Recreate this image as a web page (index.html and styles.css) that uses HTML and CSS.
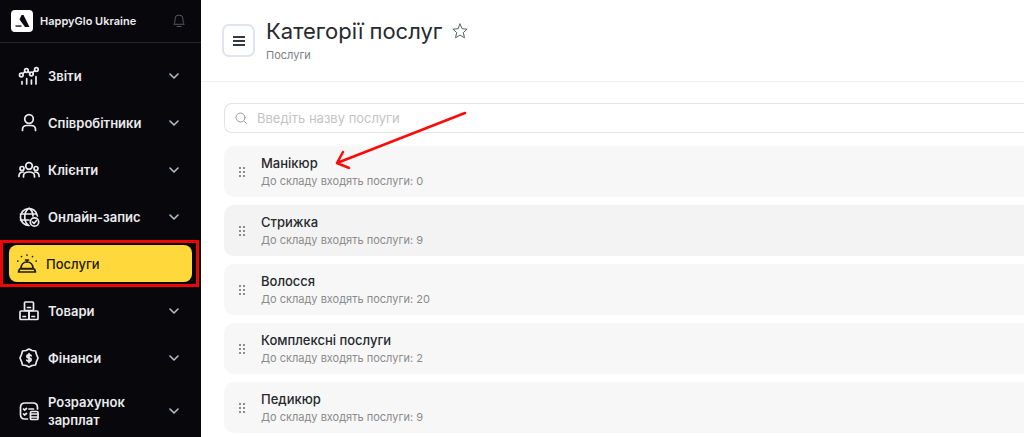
FILE: index.html
```
<!DOCTYPE html>
<html lang="uk">
<head>
  <meta charset="UTF-8">
  <meta name="viewport" content="width=device-width,initial-scale=1.0">
  <title>Категорії послуг</title>
  <link rel="stylesheet" href="styles.css">
</head>
<body>
<svg class="sprite" aria-hidden="true">
  <symbol id="chevron" viewBox="0 0 10 6"><path d="M1 1l4 4 4-4"/></symbol>
  <symbol id="grip" viewBox="0 0 6 10">
    <path d="M0 0h2v2H0zM4 0h2v2H4zM0 4h2v2H0zM4 4h2v2H4zM0 8h2v2H0zM4 8h2v2H4z"/>
  </symbol>
</svg>

<aside class="sidebar">
  <div class="brand">
    <svg class="brand-logo" viewBox="0 0 22 22">
      <rect width="22" height="22" rx="4" fill="#fff"/>
      <path d="M10.500 5h2L18.500 17H14L8.500 9.500z" fill="#0a0a10"/>
      <path d="M4.500 15.200h6v1.800h-6z" fill="#4a4a50"/>
    </svg>
    <span class="brand-name">HappyGlo Ukraine</span>
    <button class="bell" type="button" aria-label="Сповіщення">
      <svg viewBox="0 0 12 14"><path d="M1 10c1-1 1-2 1-5a4 4 0 0 1 8 0c0 3 0 4 1 5zM4 12.500h4"/></svg>
    </button>
  </div>
  <nav class="menu">
    <a class="menu-item" href="#">
      <svg class="menu-icon" viewBox="0 0 22 22">
        <path d="M4 16.500v2.500M8.700 13.500V19M13.400 15v4M18 11.500V19M4.800 8.700l2.200-2M10 6.500l2 1.500M14.700 7.700l2-2"/>
        <circle cx="3.300" cy="10" r="1.800"/><circle cx="8.400" cy="5.500" r="1.800"/><circle cx="13.400" cy="9" r="1.800"/><circle cx="18.400" cy="4.500" r="1.800"/>
      </svg>
      <span>Звіти</span><svg class="chevron"><use href="#chevron"/></svg>
    </a>
    <a class="menu-item" href="#">
      <svg class="menu-icon" viewBox="0 0 22 22"><circle cx="11" cy="7" r="4.300"/><path d="M4.500 18.500v-1c0-2.500 1.800-4 4.500-4h4c2.700 0 4.500 1.500 4.500 4v1"/></svg>
      <span>Співробітники</span><svg class="chevron"><use href="#chevron"/></svg>
    </a>
    <a class="menu-item" href="#">
      <svg class="menu-icon" viewBox="0 0 22 22">
        <circle cx="11" cy="7" r="3.300"/><circle cx="4" cy="9.500" r="2"/><circle cx="18" cy="9.500" r="2"/>
        <path d="M5.500 18v-1c0-3 2-4 5.500-4s5.500 1 5.500 4v1M.900 17.500c0-3 1-4.500 4.300-4.500M21.100 17.500c0-3-1-4.500-4.300-4.500"/>
      </svg>
      <span>Клієнти</span><svg class="chevron"><use href="#chevron"/></svg>
    </a>
    <a class="menu-item" href="#">
      <svg class="menu-icon" viewBox="0 0 22 22">
        <path d="M11 19.500A8.500 8.500 0 1 1 19.400 10M10.500 2.500c-5 4-5 13 0 17M11.500 2.500c2.500 2 3.500 5 3.500 7.500M2.500 8h16M2.500 14H11"/>
        <circle cx="16.500" cy="16" r="4.200"/><path d="M14.500 16l1.500 1.500 2.500-3"/>
      </svg>
      <span>Онлайн-запис</span><svg class="chevron"><use href="#chevron"/></svg>
    </a>
    <a class="menu-item active" href="#" aria-current="page">
      <svg class="menu-icon" viewBox="0 0 22 22">
        <path d="M5 15.500c0-4 2.500-6.500 6-6.500s6 2.500 6 6.500zM3.500 16h15l1 3h-17zM11 9V7M9.500 7h3"/>
        <path d="M11 2v.100M5.500 3.500v.100M16.500 3.500v.100M1.800 8v.100M20.200 8v.100"/>
      </svg>
      <span>Послуги</span>
    </a>
    <a class="menu-item" href="#">
      <svg class="menu-icon" viewBox="0 0 22 22">
        <rect x="6.500" y="2" width="9" height="8.500" rx="1"/><rect x="2" y="11" width="9" height="8.500" rx="1"/><rect x="11" y="11" width="9" height="8.500" rx="1"/>
        <path d="M9.500 7.500h3M5 16.500h2.500M14 16.500h2.500"/>
      </svg>
      <span>Товари</span><svg class="chevron"><use href="#chevron"/></svg>
    </a>
    <a class="menu-item" href="#">
      <svg class="menu-icon" viewBox="0 0 22 22">
        <path d="M11 2l3 1.500 3.500.500 1 3.500 1.500 3.500-1.500 3.500-1 3.500-3.500.500-3 1.500-3-1.500-3.500-.500-1-3.500L2 11l1.500-3.500 1-3.500L8 3.500z"/>
        <path d="M13.200 8.800c-.500-.800-1.200-1-2.200-1-2.800 0-2.800 2.900 0 3.200s2.800 3.200 0 3.200c-1 0-1.700-.200-2.200-1M11 6.500v9"/>
      </svg>
      <span>Фінанси</span><svg class="chevron"><use href="#chevron"/></svg>
    </a>
    <a class="menu-item" href="#">
      <svg class="menu-icon" viewBox="0 0 22 22">
        <path d="M9.500 19H7c-3 0-4.500-1.500-4.500-4.500v-7C2.500 4.500 4 3 7 3h8c3 0 4.500 1.500 4.500 4.500V9M5.500 9l1 1L8.500 8.500M11 9h4.500M5.500 14l1 1 2-1.500"/>
        <rect x="12.500" y="11.500" width="7.500" height="8" rx="1"/><path d="M12.500 14h7.500M12.500 17h7.500"/>
      </svg>
      <span>Розрахунок зарплат</span><svg class="chevron"><use href="#chevron"/></svg>
    </a>
  </nav>
</aside>

<main class="content">
  <header class="page-header">
    <button class="toggle" type="button" aria-label="Меню">
      <svg viewBox="0 0 12 12"><path d="M0 2h12M0 6h12M0 10h12"/></svg>
    </button>
    <div class="heading">
      <div class="title-row">
        <h1>Категорії послуг</h1>
        <button class="star" type="button" aria-label="Додати в обране">
          <svg viewBox="0 0 16 16"><path d="M8 1l2.100 4.700 5 .5-3.800 3.400 1.200 5.200L8 12.100l-4.500 2.700 1.200-5.200L.900 6.200l5-.500z"/></svg>
        </button>
      </div>
      <div class="subtitle">Послуги</div>
    </div>
  </header>

  <div class="panel">
    <label class="search">
      <svg viewBox="0 0 12 12"><circle cx="5.500" cy="5.500" r="4.500"/><path d="M9 9l2.500 2.500"/></svg>
      <input type="text" placeholder="Введіть назву послуги" aria-label="Введіть назву послуги">
    </label>

    <ul class="categories">
      <li class="category">
        <svg class="grip"><use href="#grip"/></svg>
        <div><div class="name">Манікюр</div><div class="count">До складу входять послуги: 0</div></div>
        <svg class="arrow" viewBox="0 0 134 60"><path d="M132 4L4 54M10 43L4 54l12 5"/></svg>
      </li>
      <li class="category hovered">
        <svg class="grip"><use href="#grip"/></svg>
        <div><div class="name">Стрижка</div><div class="count">До складу входять послуги: 9</div></div>
      </li>
      <li class="category">
        <svg class="grip"><use href="#grip"/></svg>
        <div><div class="name">Волосся</div><div class="count">До складу входять послуги: 20</div></div>
      </li>
      <li class="category">
        <svg class="grip"><use href="#grip"/></svg>
        <div><div class="name">Комплексні послуги</div><div class="count">До складу входять послуги: 2</div></div>
      </li>
      <li class="category">
        <svg class="grip"><use href="#grip"/></svg>
        <div><div class="name">Педикюр</div><div class="count">До складу входять послуги: 9</div></div>
      </li>
    </ul>
  </div>
</main>
</body>
</html>
```

FILE: styles.css
```
*{
  box-sizing: border-box;
}
body{
  margin: 0;
  display: flex;
  min-height: 100vh;
  font-family: Inter, "Liberation Sans", sans-serif;
  color: #26292d;
  background: #fff;
}
svg{
  display: block;
  fill: none;
  stroke: currentColor;
  stroke-linecap: round;
  stroke-linejoin: round;
}
button{
  padding: 0;
  border: 0;
  background: none;
  color: inherit;
  font-family: inherit;
}
.sprite{
  position: absolute;
  width: 0;
  height: 0;
}

/* sidebar */
.sidebar{
  flex: 0 0 201px;
  background: #07070c;
  color: #ececef;
}
.brand{
  display: flex;
  align-items: center;
  gap: 7px;
  height: 43px;
  padding: 0 16px 0 11px;
  border-bottom: 1px solid #25252b;
}
.brand-logo{
  width: 22px;
  height: 22px;
  stroke: none;
}
.brand-name{
  flex: 1;
  font-size: 11px;
  font-weight: 600;
  white-space: nowrap;
}
.bell{
  color: #55575e;
}
.bell svg{
  width: 12px;
  height: 14px;
}
.menu{
  display: flex;
  flex-direction: column;
  gap: 10px;
  padding: 14px 9px 0;
}
.menu-item{
  display: flex;
  align-items: center;
  gap: 8px;
  min-height: 37px;
  padding: 7px 13px 7px 9px;
  color: inherit;
  font-size: 13px;
  font-weight: 600;
  line-height: 18px;
  text-decoration: none;
}
.menu-item span{
  flex: 1;
}
.menu-icon{
  flex: none;
  width: 22px;
  height: 22px;
  stroke-width: 1.7;
}
.chevron{
  width: 10px;
  height: 6px;
  color: #b4bdc2;
  stroke-width: 1.6;
}
.active{
  position: relative;
  padding-left: 7px;
  border-radius: 8px;
  background: #ffd93b;
  color: #1d1b12;
  font-weight: 500;
}
.active::after{
  content: "";
  position: absolute;
  inset: -5px -7px -5px -9px;
  border: 3px solid #f00505;
}

/* main part */
.content{
  flex: 1;
  min-width: 0;
}
.page-header{
  display: flex;
  align-items: center;
  gap: 11px;
  height: 82px;
  padding: 0 21px;
  border-bottom: 1px solid #f0f0f0;
}
.toggle{
  display: grid;
  place-items: center;
  width: 33px;
  height: 33px;
  border: 2px solid #e1e4ec;
  border-radius: 7px;
  color: #343a40;
}
.toggle svg{
  width: 12px;
  height: 12px;
  stroke-width: 2;
  stroke-linecap: butt;
}
.heading{
  padding-bottom: 1px;
}
.title-row{
  display: flex;
  align-items: center;
  gap: 10px;
}
h1{
  margin: 0;
  font-size: 22px;
  font-weight: 400;
  line-height: 30px;
}
.star{
  color: #5b6167;
}
.star svg{
  width: 16px;
  height: 16px;
}
.subtitle{
  color: #7b7f84;
  font-size: 11px;
  line-height: 18px;
}
.panel{
  padding: 21px 0 4px 23px;
}
.search{
  display: flex;
  align-items: center;
  gap: 10px;
  height: 30px;
  padding-left: 10px;
  border: 1px solid #e2e2e2;
  border-right: 0;
  border-radius: 8px 0 0 8px;
  color: #9a9a9a;
}
.search svg{
  width: 12px;
  height: 12px;
}
.search input{
  flex: 1;
  padding: 0;
  border: 0;
  outline: 0;
  background: none;
  font-family: inherit;
  font-size: 13px;
}
.search input::placeholder{
  color: #c4c4c4;
}
.categories{
  display: grid;
  gap: 8px;
  margin: 13px 0 0;
  padding: 0;
  list-style: none;
}
.category{
  position: relative;
  display: flex;
  align-items: center;
  gap: 16px;
  min-height: 51px;
  padding: 1px 0 0 15px;
  border-radius: 10px 0 0 10px;
  background: #f7f7f7;
}
.hovered{
  background: #f3f3f3;
}
.grip{
  width: 6px;
  height: 10px;
  fill: #8d8d8d;
  stroke: none;
}
.name{
  font-size: 13px;
  font-weight: 500;
  line-height: 18px;
}
.count{
  color: #8b8b8b;
  font-size: 11px;
  line-height: 18px;
}
.arrow{
  position: absolute;
  top: -37px;
  left: 109px;
  width: 134px;
  height: 60px;
  color: #fb0a0a;
  stroke-width: 2.5;
}
```
